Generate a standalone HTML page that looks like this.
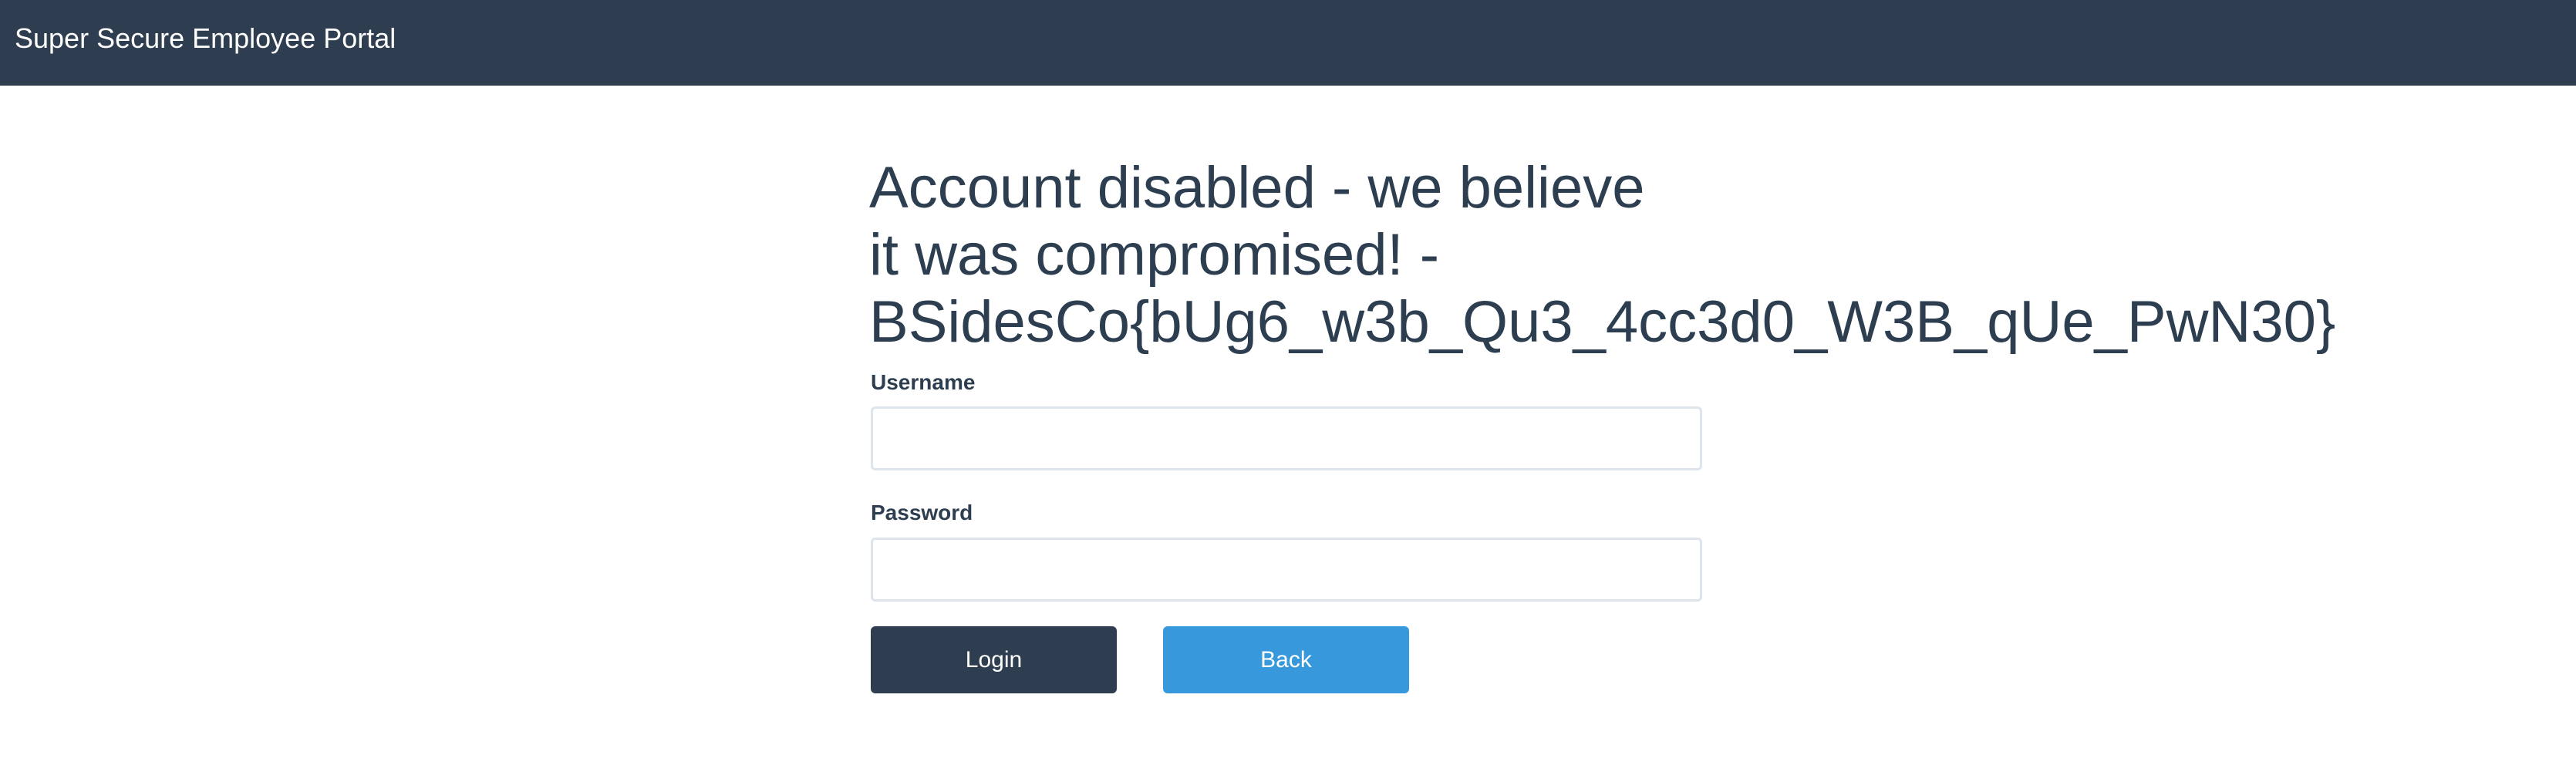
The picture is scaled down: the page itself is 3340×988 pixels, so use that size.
<!DOCTYPE html>
<html><head><meta charset="utf-8">
<style>
html,body{margin:0;padding:0;width:3340px;height:988px;background:#fff;overflow:hidden;font-family:"Liberation Sans",sans-serif;color:#2c3e50}
.hdr{position:absolute;left:0;top:0;width:3340px;height:111px;background:#2e3e50}
.hdr span{position:absolute;left:19px;top:30px;font-size:36px;color:#fff;line-height:40px}
h1{position:absolute;left:1127px;top:200px;margin:0;font-weight:400;font-size:76px;line-height:87px;white-space:nowrap;color:#2c3e50}
.lbl{position:absolute;left:1129px;font-size:28px;font-weight:700;line-height:34px}
.inp{position:absolute;left:1129px;width:1078px;height:83px;box-sizing:border-box;border:3px solid #dde4ec;border-radius:6px;background:#fff}
.btn{position:absolute;top:812px;width:319px;height:87px;border-radius:6px;color:#fff;font-size:30px;text-align:center;line-height:87px}
</style></head><body>
<div class="hdr"><span>Super Secure Employee Portal</span></div>
<h1>Account disabled - we believe<br>it was compromised! -<br>BSidesCo{bUg6_w3b_Qu3_4cc3d0_W3B_qUe_PwN30}</h1>
<div class="lbl" style="top:479px">Username</div>
<div class="inp" style="top:527px"></div>
<div class="lbl" style="top:648px">Password</div>
<div class="inp" style="top:697px"></div>
<div class="btn" style="left:1129px;background:#2e3e50">Login</div>
<div class="btn" style="left:1508px;background:#3799db">Back</div>
</body></html>
